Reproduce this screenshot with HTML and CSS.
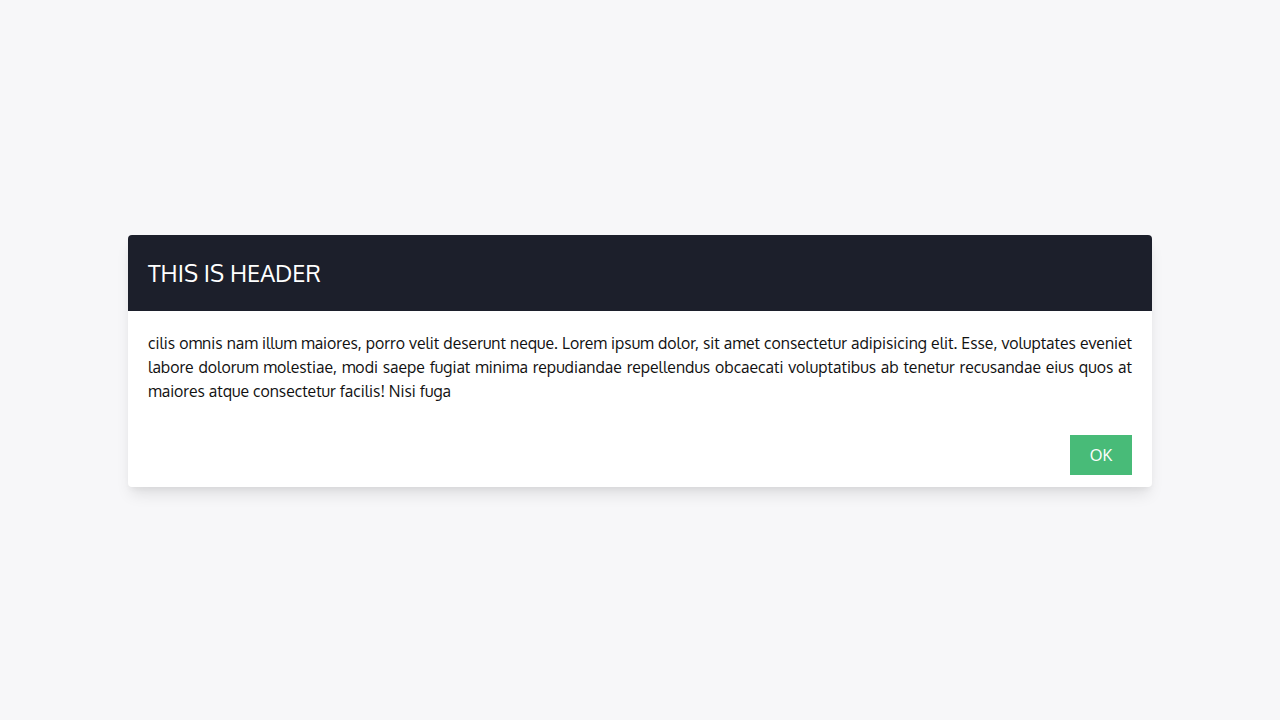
FILE: index.html
```html
<!DOCTYPE html>
<html>
<head>
  <title>Modal</title>
  <link rel="stylesheet" href="styles.css">
</head>
<body>
  <div class="page">
    <!-- Modal -->
    <div class="modal">
      <div class="modal-header">
        <h3>THIS IS HEADER</h3>
      </div>
      <div class="modal-body">
        <p>cilis omnis nam illum maiores, porro velit deserunt neque. Lorem ipsum dolor, sit amet consectetur adipisicing elit. Esse, voluptates eveniet labore dolorum molestiae, modi saepe fugiat minima repudiandae repellendus obcaecati voluptatibus ab tenetur recusandae eius quos at maiores atque consectetur facilis! Nisi fuga</p>
      </div>
      <div class="modal-footer">
        <button class="ok-button">OK</button>
      </div>
    </div>
  </div>
</body>
</html>
```

FILE: styles.css
```css
body {
  margin: 0;
  padding: 0;
  background: #f7f7f9;
  color: #111;
  font-family: Oxygen, Ubuntu, "Noto Sans", sans-serif;
}

.page {
  height: 100vh;
  box-sizing: border-box;
  padding-top: 2px;
  display: flex;
  align-items: center;
  justify-content: center;
}

.modal {
  width: 1024px;
  background: #fff;
  border-radius: 4px;
  overflow: hidden;
  box-shadow: 0 10px 15px -3px rgba(0, 0, 0, 0.1), 0 4px 6px -2px rgba(0, 0, 0, 0.05);
}

/* Header */
.modal-header {
  background: #1c1f2b;
  color: #fff;
  height: 76px;
  padding: 0 20px;
  display: flex;
  align-items: center;
}

.modal-header h3 {
  margin: 0;
  font-size: 23.5px;
  font-weight: normal;
}

/* Body */
.modal-body {
  padding: 20px 20px 0;
}

.modal-body p {
  margin: 0;
  font-size: 15.8px;
  line-height: 24px;
  text-align: justify;
}

/* Footer */
.modal-footer {
  display: flex;
  justify-content: flex-end;
  padding: 32px 20px 12px;
}

.ok-button {
  background: #48bb78;
  color: #fff;
  border: none;
  width: 62px;
  height: 40px;
  font-family: inherit;
  font-size: 16px;
  cursor: pointer;
}
```
